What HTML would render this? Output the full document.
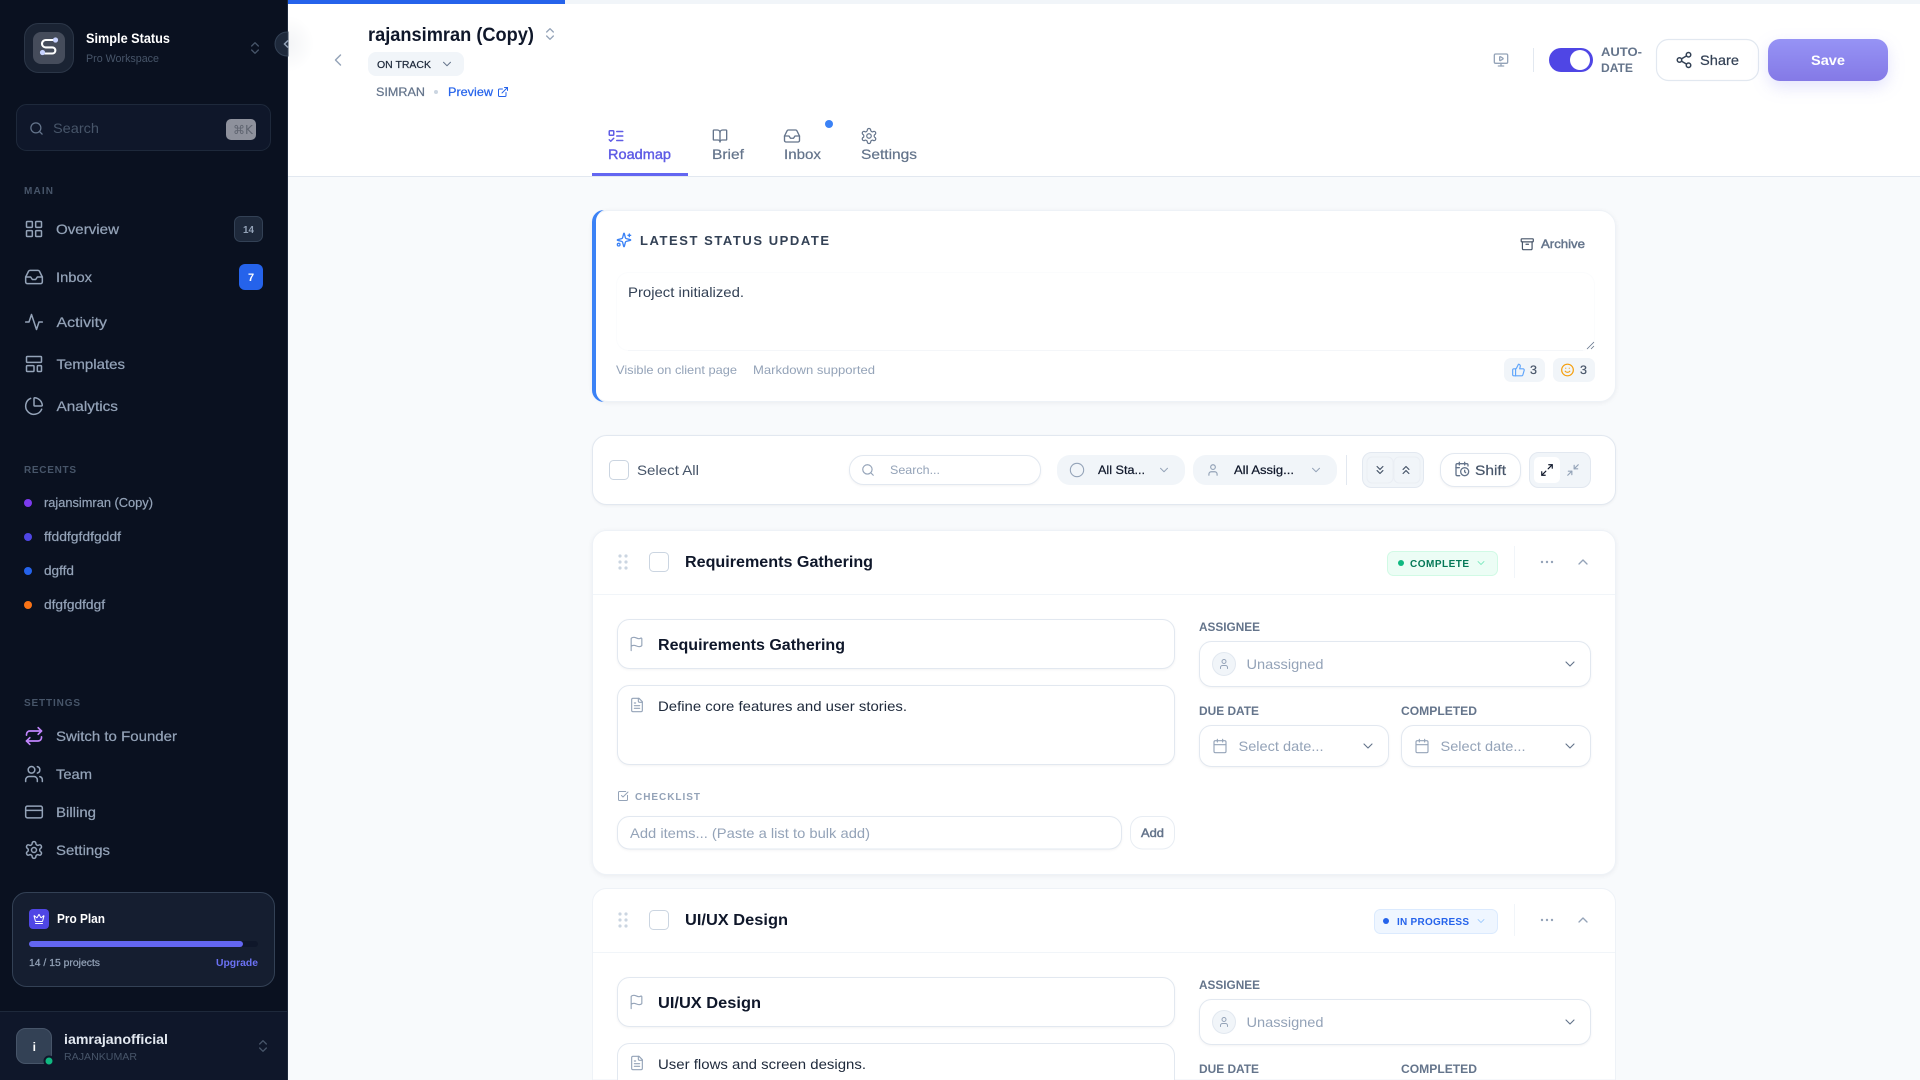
<!DOCTYPE html>
<html lang="en"><head><meta charset="utf-8"><title>Simple Status</title>
<style>
html,body{margin:0;padding:0;width:1920px;height:1080px;overflow:hidden;background:#f8fafc}
svg{display:block}
text{font-family:"Liberation Sans",sans-serif;fill:currentColor;white-space:pre}
.b{font-weight:700}
.m{stroke:currentColor;stroke-width:.22px}
.ic{fill:none;stroke:currentColor;stroke-linecap:round;stroke-linejoin:round;stroke-width:2}
.s1{filter:drop-shadow(0 1px 2px rgba(15,23,42,.06))}
.s2{filter:drop-shadow(0 1px 1px rgba(15,23,42,.05))}
.s3{filter:drop-shadow(0 6px 8px rgba(99,102,241,.18))}
</style></head><body>
<svg width="1920" height="1080" viewBox="0 0 1920 1080" xmlns="http://www.w3.org/2000/svg">
<defs>
<symbol id="grid" viewBox="0 0 24 24"><g class="ic" style="stroke-width:inherit"><rect x="3" y="3" width="7" height="7" rx="1"/><rect x="14" y="3" width="7" height="7" rx="1"/><rect x="14" y="14" width="7" height="7" rx="1"/><rect x="3" y="14" width="7" height="7" rx="1"/></g></symbol>
<symbol id="inbox" viewBox="0 0 24 24"><g class="ic" style="stroke-width:inherit"><polyline points="22 12 16 12 14 15 10 15 8 12 2 12"/><path d="M5.45 5.11 2 12v6a2 2 0 0 0 2 2h16a2 2 0 0 0 2-2v-6l-3.45-6.89A2 2 0 0 0 16.76 4H7.24a2 2 0 0 0-1.79 1.11z"/></g></symbol>
<symbol id="activity" viewBox="0 0 24 24"><g class="ic" style="stroke-width:inherit"><polyline points="22 12 18 12 15 21 9 3 6 12 2 12"/></g></symbol>
<symbol id="tmpl" viewBox="0 0 24 24"><g class="ic" style="stroke-width:inherit"><rect x="3" y="3" width="18" height="7" rx="1"/><rect x="3" y="14" width="9" height="7" rx="1"/><rect x="16" y="14" width="5" height="7" rx="1"/></g></symbol>
<symbol id="pie" viewBox="0 0 24 24"><g class="ic" style="stroke-width:inherit"><path d="M21 12c.552 0 1.005-.449.95-.998a10 10 0 0 0-8.953-8.951c-.55-.055-.998.398-.998.95v8a1 1 0 0 0 1 1z"/><path d="M21.21 15.89A10 10 0 1 1 8 2.83"/></g></symbol>
<symbol id="repeat" viewBox="0 0 24 24"><g class="ic" style="stroke-width:inherit"><path d="m17 2 4 4-4 4"/><path d="M3 11v-1a4 4 0 0 1 4-4h14"/><path d="m7 22-4-4 4-4"/><path d="M21 13v1a4 4 0 0 1-4 4H3"/></g></symbol>
<symbol id="users" viewBox="0 0 24 24"><g class="ic" style="stroke-width:inherit"><path d="M16 21v-2a4 4 0 0 0-4-4H6a4 4 0 0 0-4 4v2"/><circle cx="9" cy="7" r="4"/><path d="M22 21v-2a4 4 0 0 0-3-3.87"/><path d="M16 3.13a4 4 0 0 1 0 7.75"/></g></symbol>
<symbol id="card" viewBox="0 0 24 24"><g class="ic" style="stroke-width:inherit"><rect x="2" y="5" width="20" height="14" rx="2"/><line x1="2" y1="10" x2="22" y2="10"/></g></symbol>
<symbol id="gear" viewBox="0 0 24 24"><g class="ic" style="stroke-width:inherit"><path d="M12.22 2h-.44a2 2 0 0 0-2 2v.18a2 2 0 0 1-1 1.73l-.43.25a2 2 0 0 1-2 0l-.15-.08a2 2 0 0 0-2.73.73l-.22.38a2 2 0 0 0 .73 2.73l.15.1a2 2 0 0 1 1 1.72v.51a2 2 0 0 1-1 1.74l-.15.09a2 2 0 0 0-.73 2.73l.22.38a2 2 0 0 0 2.73.73l.15-.08a2 2 0 0 1 2 0l.43.25a2 2 0 0 1 1 1.73V20a2 2 0 0 0 2 2h.44a2 2 0 0 0 2-2v-.18a2 2 0 0 1 1-1.73l.43-.25a2 2 0 0 1 2 0l.15.08a2 2 0 0 0 2.73-.73l.22-.39a2 2 0 0 0-.73-2.73l-.15-.08a2 2 0 0 1-1-1.74v-.5a2 2 0 0 1 1-1.74l.15-.09a2 2 0 0 0 .73-2.73l-.22-.38a2 2 0 0 0-2.73-.73l-.15.08a2 2 0 0 1-2 0l-.43-.25a2 2 0 0 1-1-1.73V4a2 2 0 0 0-2-2z"/><circle cx="12" cy="12" r="3"/></g></symbol>
<symbol id="search" viewBox="0 0 24 24"><g class="ic"><circle cx="11" cy="11" r="8"/><path d="m21 21-4.3-4.3"/></g></symbol>
<symbol id="updown" viewBox="0 0 24 24"><g class="ic"><path d="m7 15 5 5 5-5"/><path d="m7 9 5-5 5 5"/></g></symbol>
<symbol id="cdown" viewBox="0 0 24 24"><g class="ic" style="stroke-width:1.7"><path d="m6 9 6 6 6-6"/></g></symbol>
<symbol id="cup" viewBox="0 0 24 24"><g class="ic"><path d="m18 15-6-6-6 6"/></g></symbol>
<symbol id="cleft" viewBox="0 0 24 24"><g class="ic" style="stroke-width:1.7"><path d="m15 18-6-6 6-6"/></g></symbol>
<symbol id="ext" viewBox="0 0 24 24"><g class="ic"><path d="M15 3h6v6"/><path d="M10 14 21 3"/><path d="M18 13v6a2 2 0 0 1-2 2H5a2 2 0 0 1-2-2V8a2 2 0 0 1 2-2h6"/></g></symbol>
<symbol id="todo" viewBox="0 0 24 24"><g class="ic"><rect x="3" y="5" width="6" height="6" rx="1"/><path d="m3 17 2 2 4-4"/><path d="M13 6h8"/><path d="M13 12h8"/><path d="M13 18h8"/></g></symbol>
<symbol id="book" viewBox="0 0 24 24"><g class="ic"><path d="M12 7v14"/><path d="M3 18a1 1 0 0 1-1-1V4a1 1 0 0 1 1-1h5a4 4 0 0 1 4 4 4 4 0 0 1 4-4h5a1 1 0 0 1 1 1v13a1 1 0 0 1-1 1h-6a3 3 0 0 0-3 3 3 3 0 0 0-3-3z"/></g></symbol>
<symbol id="mon" viewBox="0 0 24 24"><g class="ic"><path d="M10 7.75a.75.75 0 0 1 1.142-.638l3.664 2.249a.75.75 0 0 1 0 1.278l-3.664 2.25a.75.75 0 0 1-1.142-.64z"/><path d="M12 17v4"/><path d="M8 21h8"/><rect x="2" y="3" width="20" height="14" rx="2"/></g></symbol>
<symbol id="share" viewBox="0 0 24 24"><g class="ic"><circle cx="18" cy="5" r="3"/><circle cx="6" cy="12" r="3"/><circle cx="18" cy="19" r="3"/><line x1="8.59" y1="13.51" x2="15.42" y2="17.49"/><line x1="15.41" y1="6.51" x2="8.59" y2="10.49"/></g></symbol>
<symbol id="spark" viewBox="0 0 24 24"><g class="ic"><path d="M9.937 15.5A2 2 0 0 0 8.5 14.063l-6.135-1.582a.5.5 0 0 1 0-.962L8.5 9.936A2 2 0 0 0 9.937 8.5l1.582-6.135a.5.5 0 0 1 .963 0L14.063 8.5A2 2 0 0 0 15.5 9.937l6.135 1.581a.5.5 0 0 1 0 .964L15.5 14.063a2 2 0 0 0-1.437 1.437l-1.582 6.135a.5.5 0 0 1-.963 0z"/><path d="M20 3v4"/><path d="M22 5h-4"/><circle cx="4" cy="19" r="2"/></g></symbol>
<symbol id="arch" viewBox="0 0 24 24"><g class="ic"><rect x="2" y="3" width="20" height="5" rx="1"/><path d="M4 8v11a2 2 0 0 0 2 2h12a2 2 0 0 0 2-2V8"/><path d="M10 12h4"/></g></symbol>
<symbol id="thumb" viewBox="0 0 24 24"><g class="ic"><path d="M7 10v12"/><path d="M15 5.88 14 10h5.83a2 2 0 0 1 1.92 2.56l-2.33 8A2 2 0 0 1 17.5 22H4a2 2 0 0 1-2-2v-8a2 2 0 0 1 2-2h2.76a2 2 0 0 0 1.79-1.11L12 2a3.13 3.13 0 0 1 3 3.88Z"/></g></symbol>
<symbol id="smile" viewBox="0 0 24 24"><g class="ic"><circle cx="12" cy="12" r="10"/><path d="M8 14s1.5 2 4 2 4-2 4-2"/><line x1="9" y1="9" x2="9.01" y2="9"/><line x1="15" y1="9" x2="15.01" y2="9"/></g></symbol>
<symbol id="circ" viewBox="0 0 24 24"><g class="ic" style="stroke-width:1.6"><circle cx="12" cy="12" r="10"/></g></symbol>
<symbol id="user" viewBox="0 0 24 24"><g class="ic"><path d="M19 21v-2a4 4 0 0 0-4-4H9a4 4 0 0 0-4 4v2"/><circle cx="12" cy="7" r="4"/></g></symbol>
<symbol id="dd" viewBox="0 0 24 24"><g class="ic"><path d="m7 6 5 5 5-5"/><path d="m7 13 5 5 5-5"/></g></symbol>
<symbol id="du" viewBox="0 0 24 24"><g class="ic"><path d="m17 11-5-5-5 5"/><path d="m17 18-5-5-5 5"/></g></symbol>
<symbol id="calc" viewBox="0 0 24 24"><g class="ic"><path d="M21 7.5V6a2 2 0 0 0-2-2H5a2 2 0 0 0-2 2v14a2 2 0 0 0 2 2h3.5"/><path d="M16 2v4"/><path d="M8 2v4"/><path d="M3 10h5"/><path d="M17.5 17.5 16 16.3V14"/><circle cx="16" cy="16" r="6"/></g></symbol>
<symbol id="max" viewBox="0 0 24 24"><g class="ic"><path d="M15 3h6v6"/><path d="m21 3-7 7"/><path d="m3 21 7-7"/><path d="M9 21H3v-6"/></g></symbol>
<symbol id="min" viewBox="0 0 24 24"><g class="ic"><path d="m14 10 7-7"/><path d="M20 10h-6V4"/><path d="m3 21 7-7"/><path d="M4 14h6v6"/></g></symbol>
<symbol id="flag" viewBox="0 0 24 24"><g class="ic" style="stroke-width:1.7"><path d="M4 22V4a1 1 0 0 1 .4-.8A6 6 0 0 1 8 2c3 0 5 2 7.333 2q2 0 3.067-.8A1 1 0 0 1 20 4v10a1 1 0 0 1-.4.8A6 6 0 0 1 16 16c-3 0-5-2-8-2a6 6 0 0 0-4 1.528"/></g></symbol>
<symbol id="file" viewBox="0 0 24 24"><g class="ic" style="stroke-width:1.7"><path d="M15 2H6a2 2 0 0 0-2 2v16a2 2 0 0 0 2 2h12a2 2 0 0 0 2-2V7Z"/><path d="M14 2v4a2 2 0 0 0 2 2h4"/><path d="M10 9H8"/><path d="M16 13H8"/><path d="M16 17H8"/></g></symbol>
<symbol id="check" viewBox="0 0 24 24"><g class="ic"><path d="M21 10.656V19a2 2 0 0 1-2 2H5a2 2 0 0 1-2-2V5a2 2 0 0 1 2-2h12.344"/><path d="m9 11 3 3L22 4"/></g></symbol>
<symbol id="cal" viewBox="0 0 24 24"><g class="ic" style="stroke-width:1.7"><path d="M8 2v4"/><path d="M16 2v4"/><rect x="3" y="4" width="18" height="18" rx="2"/><path d="M3 10h18"/></g></symbol>
<symbol id="crown" viewBox="0 0 24 24"><g class="ic"><path d="M11.562 3.266a.5.5 0 0 1 .876 0L15.39 8.87a1 1 0 0 0 1.516.294L21.183 5.5a.5.5 0 0 1 .798.519l-2.834 10.246a1 1 0 0 1-.956.734H5.81a1 1 0 0 1-.957-.734L2.02 6.02a.5.5 0 0 1 .798-.519l4.276 3.664a1 1 0 0 0 1.516-.294z"/><path d="M5 21h14"/></g></symbol>
<linearGradient id="save" x1="0" y1="0" x2="0" y2="1"><stop offset="0" stop-color="#9693f5"/><stop offset="1" stop-color="#8479e6"/></linearGradient>
<radialGradient id="hg" cx=".5" cy=".5" r=".5"><stop offset="0" stop-color="#f3f4f6"/><stop offset="1" stop-color="#fff"/></radialGradient>
</defs>

<!-- Main background -->
<rect x="288" y="0" width="1632" height="1080" fill="#f8fafc"/>
<rect x="288" y="0" width="1632" height="176" fill="#fff"/>
<ellipse cx="288" cy="44" rx="26" ry="28" fill="url(#hg)"/>
<rect x="288" y="176" width="1632" height="1" fill="#e2e8f0"/>
<rect x="288" y="0" width="1632" height="4" fill="#f1f5f9"/>
<rect x="288" y="0" width="277" height="4" fill="#2563eb"/>

<!-- Header -->
<use href="#cleft" x="328" y="50" width="20" height="20" color="#94a3b8"/>
<text x="368" y="41" textLength="166" lengthAdjust="spacingAndGlyphs" font-size="19" class="b" color="#0f172a">rajansimran (Copy)</text>
<use href="#updown" x="542" y="26" width="16" height="16" color="#94a3b8"/>
<rect x="368" y="52" width="96" height="24" rx="8" fill="#f1f5f9"/>
<text x="377" y="68" textLength="54" lengthAdjust="spacingAndGlyphs" font-size="10.5" class="m" color="#1e293b">ON TRACK</text>
<use href="#cdown" x="440" y="57" width="14" height="14" color="#64748b"/>
<text x="376" y="96" textLength="49" lengthAdjust="spacingAndGlyphs" font-size="12" class="m" color="#64748b">SIMRAN</text>
<circle cx="436" cy="92" r="2" fill="#cbd5e1"/>
<text x="448" y="96" textLength="45" lengthAdjust="spacingAndGlyphs" font-size="12" class="m" color="#2563eb">Preview</text>
<use href="#ext" x="497" y="86" width="12" height="12" color="#2563eb"/>

<use href="#todo" x="607" y="127" width="18" height="18" color="#5f5ce5"/>
<text x="608" y="159" textLength="63" lengthAdjust="spacingAndGlyphs" font-size="14" class="m" color="#5f5ce5" style="stroke-width:.4px">Roadmap</text>
<rect x="592" y="173" width="96" height="3" fill="#6366f1"/>
<use href="#book" x="712" y="128" width="16" height="16" color="#64748b"/>
<text x="712" y="159" textLength="32" lengthAdjust="spacingAndGlyphs" font-size="14" class="m" color="#64748b">Brief</text>
<use href="#inbox" x="783" y="127" width="18" height="18" color="#64748b" stroke-width="1.8"/>
<text x="784" y="159" textLength="37" lengthAdjust="spacingAndGlyphs" font-size="14" class="m" color="#64748b">Inbox</text>
<circle cx="829" cy="124" r="4" fill="#3b82f6"/>
<use href="#gear" x="860" y="127" width="18" height="18" color="#64748b" stroke-width="1.6"/>
<text x="861" y="159" textLength="56" lengthAdjust="spacingAndGlyphs" font-size="14" class="m" color="#64748b">Settings</text>

<use href="#mon" x="1493" y="52" width="16" height="16" color="#94a3b8"/>
<rect x="1533" y="48" width="1" height="24" fill="#e2e8f0"/>
<rect x="1549" y="48" width="44" height="24" rx="12" fill="#4f46e5"/>
<circle cx="1580" cy="60" r="10" fill="#fff"/>
<text x="1601" y="56" textLength="41" lengthAdjust="spacingAndGlyphs" font-size="12" class="b" color="#64748b">AUTO-</text>
<text x="1601" y="72" textLength="32" lengthAdjust="spacingAndGlyphs" font-size="12" class="b" color="#64748b">DATE</text>
<rect x="1656.5" y="39.5" width="102" height="41" rx="12" fill="#fff" stroke="#e2e8f0" stroke-width="1.2"/>
<use href="#share" x="1675" y="51" width="18" height="18" color="#334155"/>
<text x="1700" y="65" textLength="39" lengthAdjust="spacingAndGlyphs" font-size="14" class="m" color="#334155">Share</text>
<rect x="1768" y="39" width="120" height="42" rx="12" fill="url(#save)" class="s3"/>
<text x="1811" y="65" textLength="34" lengthAdjust="spacingAndGlyphs" font-size="14" class="b" color="#fff">Save</text>

<!-- Status card -->
<rect x="592.5" y="210.5" width="1023" height="191" rx="16" fill="#fff" stroke="#eef2f7" class="s1"/>
<path d="M604 210a12 12 0 0 0-12 12v168a12 12 0 0 0 12 12 12 12 0 0 1-8-12V222a12 12 0 0 1 8-12z" fill="#3b82f6"/>
<use href="#spark" x="616" y="232" width="16" height="16" color="#3b82f6"/>
<text x="640" y="245" textLength="189" lengthAdjust="spacing" font-size="13" class="b" color="#334155">LATEST STATUS UPDATE</text>
<use href="#arch" x="1520" y="237" width="14.5" height="14.5" color="#475569"/>
<text x="1541" y="248" textLength="44" lengthAdjust="spacingAndGlyphs" font-size="12" class="m" color="#64748b" style="stroke-width:.45px">Archive</text>
<rect x="616.5" y="272.5" width="978" height="78" rx="12" fill="#fff" stroke="#fbfcfd"/>
<path d="M628 350.500H1583" stroke="#f4f6f9" fill="none"/>
<text x="628" y="297" textLength="116" lengthAdjust="spacingAndGlyphs" font-size="14" color="#334155">Project initialized.</text>
<path d="M1587 349l7-7M1591 349l3-3" stroke="#64748b" stroke-width=".8" fill="none"/>
<text x="616" y="374" textLength="121" lengthAdjust="spacingAndGlyphs" font-size="12" color="#94a3b8">Visible on client page</text>
<text x="753" y="374" textLength="122" lengthAdjust="spacingAndGlyphs" font-size="12" color="#94a3b8">Markdown supported</text>
<rect x="1504" y="358" width="41" height="24" rx="7" fill="#f1f5f9"/>
<use href="#thumb" x="1511.5" y="363" width="14" height="14" color="#60a5fa"/>
<text x="1530" y="374" font-size="12" textLength="7" lengthAdjust="spacingAndGlyphs" class="m" color="#475569">3</text>
<rect x="1553" y="358" width="42" height="24" rx="7" fill="#f1f5f9"/>
<use href="#smile" x="1560.5" y="363" width="14" height="14" color="#f59e0b"/>
<text x="1580" y="374" font-size="12" textLength="7" lengthAdjust="spacingAndGlyphs" class="m" color="#475569">3</text>

<!-- Toolbar -->
<rect x="592.5" y="435.5" width="1023" height="69" rx="14" fill="#fff" stroke="#e2e8f0" class="s2"/>
<rect x="609.5" y="460.5" width="19" height="19" rx="4" fill="#fff" stroke="#cbd5e1"/>
<text x="637" y="475" textLength="62" lengthAdjust="spacingAndGlyphs" font-size="14" color="#475569">Select All</text>
<rect x="849.5" y="455.5" width="191" height="29" rx="14" fill="#fff" stroke="#e2e8f0" class="s2"/>
<use href="#search" x="861" y="463" width="14" height="14" color="#94a3b8"/>
<text x="890" y="474" textLength="50" lengthAdjust="spacingAndGlyphs" font-size="12" color="#94a3b8">Search...</text>
<rect x="1057" y="455" width="128" height="30" rx="13" fill="#f1f5f9"/>
<use href="#circ" x="1069" y="462" width="16" height="16" color="#94a3b8"/>
<text x="1098" y="474" textLength="47" lengthAdjust="spacingAndGlyphs" font-size="12" class="m" color="#0f172a">All Sta...</text>
<use href="#cdown" x="1157" y="463" width="14" height="14" color="#94a3b8"/>
<rect x="1193" y="455" width="144" height="30" rx="13" fill="#f1f5f9"/>
<use href="#user" x="1206" y="463" width="14" height="14" color="#94a3b8"/>
<text x="1234" y="474" textLength="60" lengthAdjust="spacingAndGlyphs" font-size="12" class="m" color="#0f172a">All Assig...</text>
<use href="#cdown" x="1309" y="463" width="14" height="14" color="#94a3b8"/>
<rect x="1346" y="455" width="1" height="30" fill="#e2e8f0"/>
<rect x="1362.5" y="452.5" width="61" height="35" rx="9" fill="#f1f5f9" stroke="#e2e8f0"/>
<rect x="1367" y="457" width="26" height="26" rx="5" fill="#f1f5f9" stroke="#eaeef4"/>
<rect x="1394" y="457" width="26" height="26" rx="5" fill="#f1f5f9" stroke="#eaeef4"/>
<use href="#dd" x="1373" y="463" width="14" height="14" color="#475569"/>
<use href="#du" x="1399" y="463" width="14" height="14" color="#475569"/>
<rect x="1440.5" y="453.5" width="80" height="33" rx="14" fill="#fff" stroke="#e2e8f0" class="s2"/>
<use href="#calc" x="1454" y="461" width="16" height="16" color="#64748b"/>
<text x="1475" y="475" textLength="31" lengthAdjust="spacingAndGlyphs" font-size="14" class="m" color="#475569">Shift</text>
<rect x="1529.5" y="452.5" width="61" height="35" rx="9" fill="#f1f5f9" stroke="#e2e8f0"/>
<rect x="1534" y="457" width="26" height="26" rx="5" fill="#fff"/>
<use href="#max" x="1540" y="463" width="14" height="14" color="#0f172a"/>
<use href="#min" x="1566" y="463" width="14" height="14" color="#94a3b8"/>

<!-- Task card 1 -->
<g>
<rect x="592.5" y="530.5" width="1023" height="344" rx="14" fill="#fff" stroke="#eef2f7" class="s1"/>
<rect x="593" y="594" width="1022" height="1" fill="#f1f5f9"/>
<g fill="#cbd5e1"><circle cx="620" cy="556" r="1.6"/><circle cx="626" cy="556" r="1.6"/><circle cx="620" cy="562" r="1.6"/><circle cx="626" cy="562" r="1.6"/><circle cx="620" cy="568" r="1.6"/><circle cx="626" cy="568" r="1.6"/></g>
<rect x="649.5" y="552.5" width="19" height="19" rx="4" fill="#fff" stroke="#cbd5e1"/>
<text x="685" y="567" textLength="188" lengthAdjust="spacingAndGlyphs" font-size="16" class="b" color="#0f172a">Requirements Gathering</text>
<rect x="1387.5" y="551.5" width="110" height="24" rx="6" fill="#ecfdf5" stroke="#d1fae5"/>
<circle cx="1401" cy="563" r="3" fill="#10b981"/>
<text x="1410" y="567" textLength="59" lengthAdjust="spacing" font-size="10" class="b" color="#047857">COMPLETE</text>
<use href="#cdown" x="1475" y="557" width="12" height="12" color="#6ee7b7"/>
<rect x="1514" y="546" width="1" height="32" fill="#f1f5f9"/>
<g fill="#94a3b8"><circle cx="1542" cy="562" r="1.2"/><circle cx="1547" cy="562" r="1.2"/><circle cx="1552" cy="562" r="1.2"/></g>
<use href="#cup" x="1575" y="554" width="16" height="16" color="#94a3b8"/>

<rect x="617.5" y="619.5" width="557" height="49" rx="12" fill="#fff" stroke="#e2e8f0" class="s2"/>
<use href="#flag" x="628.5" y="636" width="16" height="16" color="#94a3b8"/>
<text x="658" y="650" textLength="187" lengthAdjust="spacingAndGlyphs" font-size="16" class="b" color="#0f172a">Requirements Gathering</text>
<rect x="617.5" y="685.5" width="557" height="79" rx="12" fill="#fff" stroke="#e2e8f0" class="s2"/>
<use href="#file" x="629" y="697" width="16" height="16" color="#94a3b8"/>
<text x="658" y="711" textLength="249" lengthAdjust="spacingAndGlyphs" font-size="14" color="#1e293b">Define core features and user stories.</text>
<use href="#check" x="617" y="790" width="12" height="12" color="#94a3b8"/>
<text x="635" y="800" textLength="65" lengthAdjust="spacing" font-size="10" class="b" color="#94a3b8">CHECKLIST</text>
<rect x="617.5" y="816.5" width="504" height="32.5" rx="12" fill="#fff" stroke="#e2e8f0" class="s2"/>
<text x="630" y="838" textLength="240" lengthAdjust="spacingAndGlyphs" font-size="14" color="#94a3b8">Add items... (Paste a list to bulk add)</text>
<rect x="1130.5" y="816.5" width="44" height="32.5" rx="12" fill="#fff" stroke="#e8edf3"/>
<text x="1141" y="837" textLength="23" lengthAdjust="spacingAndGlyphs" font-size="12" class="m" color="#64748b" style="stroke-width:.45px">Add</text>

<text x="1199" y="631" textLength="61" lengthAdjust="spacingAndGlyphs" font-size="12" class="b" color="#64748b">ASSIGNEE</text>
<rect x="1199.5" y="641.5" width="391" height="45" rx="12" fill="#fff" stroke="#e2e8f0" class="s2"/>
<circle cx="1224" cy="664" r="11.5" fill="#f1f5f9" stroke="#e2e8f0"/>
<use href="#user" x="1218" y="658" width="12" height="12" color="#94a3b8"/>
<text x="1246.5" y="669" textLength="77" lengthAdjust="spacingAndGlyphs" font-size="14" color="#94a3b8">Unassigned</text>
<use href="#cdown" x="1562" y="656" width="16" height="16" color="#64748b"/>
<text x="1199" y="715" textLength="60" lengthAdjust="spacingAndGlyphs" font-size="12" class="b" color="#64748b">DUE DATE</text>
<text x="1401" y="715" textLength="76" lengthAdjust="spacingAndGlyphs" font-size="12" class="b" color="#64748b">COMPLETED</text>
<rect x="1199.5" y="725.5" width="189" height="41" rx="12" fill="#fff" stroke="#e2e8f0" class="s2"/>
<use href="#cal" x="1212" y="738" width="16" height="16" color="#94a3b8"/>
<text x="1238.5" y="751" textLength="85" lengthAdjust="spacingAndGlyphs" font-size="14" color="#94a3b8">Select date...</text>
<use href="#cdown" x="1360" y="738" width="16" height="16" color="#64748b"/>
<rect x="1401.5" y="725.5" width="189" height="41" rx="12" fill="#fff" stroke="#e2e8f0" class="s2"/>
<use href="#cal" x="1414" y="738" width="16" height="16" color="#94a3b8"/>
<text x="1440.5" y="751" textLength="85" lengthAdjust="spacingAndGlyphs" font-size="14" color="#94a3b8">Select date...</text>
<use href="#cdown" x="1562" y="738" width="16" height="16" color="#64748b"/>
</g>

<!-- Task card 2 -->
<g>
<path d="M592.5 1080V902.5a14 14 0 0 1 14-14H1601.5a14 14 0 0 1 14 14V1080z" fill="#fff" stroke="#eef2f7"/>
<rect x="593" y="952" width="1022" height="1" fill="#f1f5f9"/>
<g fill="#cbd5e1"><circle cx="620" cy="914" r="1.6"/><circle cx="626" cy="914" r="1.6"/><circle cx="620" cy="920" r="1.6"/><circle cx="626" cy="920" r="1.6"/><circle cx="620" cy="926" r="1.6"/><circle cx="626" cy="926" r="1.6"/></g>
<rect x="649.5" y="910.5" width="19" height="19" rx="4" fill="#fff" stroke="#cbd5e1"/>
<text x="685" y="925" textLength="103" lengthAdjust="spacingAndGlyphs" font-size="16" class="b" color="#0f172a">UI/UX Design</text>
<rect x="1374.5" y="909.5" width="123" height="24" rx="6" fill="#eff6ff" stroke="#dbeafe"/>
<circle cx="1386" cy="921" r="3" fill="#2563eb"/>
<text x="1397" y="925" textLength="72" lengthAdjust="spacing" font-size="10" class="b" color="#2563eb">IN PROGRESS</text>
<use href="#cdown" x="1475" y="915" width="12" height="12" color="#93c5fd"/>
<rect x="1514" y="904" width="1" height="32" fill="#f1f5f9"/>
<g fill="#94a3b8"><circle cx="1542" cy="920" r="1.2"/><circle cx="1547" cy="920" r="1.2"/><circle cx="1552" cy="920" r="1.2"/></g>
<use href="#cup" x="1575" y="912" width="16" height="16" color="#94a3b8"/>
<rect x="617.5" y="977.5" width="557" height="49" rx="12" fill="#fff" stroke="#e2e8f0" class="s2"/>
<use href="#flag" x="628.5" y="994" width="16" height="16" color="#94a3b8"/>
<text x="658" y="1008" textLength="103" lengthAdjust="spacingAndGlyphs" font-size="16" class="b" color="#0f172a">UI/UX Design</text>
<path d="M617.5 1080V1055.5a12 12 0 0 1 12-12H1162.5a12 12 0 0 1 12 12V1080" fill="#fff" stroke="#e2e8f0"/>
<use href="#file" x="629" y="1055" width="16" height="16" color="#94a3b8"/>
<text x="658" y="1069" textLength="208" lengthAdjust="spacingAndGlyphs" font-size="14" color="#1e293b">User flows and screen designs.</text>
<text x="1199" y="989" textLength="61" lengthAdjust="spacingAndGlyphs" font-size="12" class="b" color="#64748b">ASSIGNEE</text>
<rect x="1199.5" y="999.5" width="391" height="45" rx="12" fill="#fff" stroke="#e2e8f0" class="s2"/>
<circle cx="1224" cy="1022" r="11.5" fill="#f1f5f9" stroke="#e2e8f0"/>
<use href="#user" x="1218" y="1016" width="12" height="12" color="#94a3b8"/>
<text x="1246.5" y="1027" textLength="77" lengthAdjust="spacingAndGlyphs" font-size="14" color="#94a3b8">Unassigned</text>
<use href="#cdown" x="1562" y="1014" width="16" height="16" color="#64748b"/>
<text x="1199" y="1073" textLength="60" lengthAdjust="spacingAndGlyphs" font-size="12" class="b" color="#64748b">DUE DATE</text>
<text x="1401" y="1073" textLength="76" lengthAdjust="spacingAndGlyphs" font-size="12" class="b" color="#64748b">COMPLETED</text>
</g>

<!-- Sidebar -->
<rect x="0" y="0" width="288" height="1080" fill="#0a1120"/>
<rect x="287" y="0" width="1" height="1080" fill="#1e293b"/>
<path d="M288 32h-1a12 12 0 0 0 0 24h1z" fill="#1e293b" stroke="#334155"/>
<path d="M288 40.5l-3.5 3.5 3.5 3.5" fill="none" stroke="#94a3b8" stroke-width="1.5"/>
<rect x="24.5" y="23.5" width="49" height="49" rx="14" fill="#1a2333" stroke="#2b3647"/>
<rect x="33" y="32" width="32" height="32" rx="8" fill="#454c5b"/>
<path d="M56 40H45.7a3.7 3.7 0 0 0 0 7.4h6.6a3.05 3.05 0 0 1 0 6.1H42" fill="none" stroke="#fff" stroke-width="2.1" stroke-linecap="round"/>
<circle cx="55.5" cy="40" r="2.6" fill="#c7d2fe"/>
<circle cx="42.5" cy="52.5" r="2.6" fill="#c7d2fe"/>
<text x="86" y="43" textLength="84" lengthAdjust="spacingAndGlyphs" font-size="14" class="b" color="#fff">Simple Status</text>
<text x="86" y="62" textLength="73" lengthAdjust="spacingAndGlyphs" font-size="11" color="#475569">Pro Workspace</text>
<use href="#updown" x="247" y="40" width="16" height="16" color="#475569"/>

<rect x="16.5" y="104.5" width="254" height="46" rx="10" fill="#0f172a" stroke="#1e293b"/>
<use href="#search" x="29" y="121" width="15" height="15" color="#64748b"/>
<text x="53" y="133" textLength="46" lengthAdjust="spacingAndGlyphs" font-size="14" color="#475569">Search</text>
<rect x="226" y="119" width="30" height="21" rx="5" fill="#8e919c"/>
<text x="233" y="134" font-size="12" style="font-family:'DejaVu Sans',sans-serif" color="#5f6470">⌘K</text>

<text x="24" y="194" textLength="29" lengthAdjust="spacing" font-size="10" class="b" color="#475569">MAIN</text>
<use href="#grid" x="24" y="219" width="20" height="20" color="#94a3b8" stroke-width="1.8"/>
<text x="56" y="234" textLength="63" lengthAdjust="spacingAndGlyphs" font-size="14" class="m" color="#94a3b8">Overview</text>
<rect x="234.5" y="216.5" width="28" height="25" rx="6" fill="#1e293b" stroke="#334155"/>
<text x="243" y="233" textLength="11" lengthAdjust="spacingAndGlyphs" font-size="10.5" class="b" color="#94a3b8">14</text>
<use href="#inbox" x="24" y="267" width="20" height="20" color="#94a3b8" stroke-width="1.8"/>
<text x="56" y="282" textLength="36" lengthAdjust="spacingAndGlyphs" font-size="14" class="m" color="#94a3b8">Inbox</text>
<rect x="239" y="264" width="24" height="26" rx="6" fill="#2563eb"/>
<text x="248" y="281" font-size="11" class="b" color="#fff">7</text>
<use href="#activity" x="24" y="312" width="20" height="20" color="#94a3b8" stroke-width="1.8"/>
<text x="56.5" y="327" textLength="50.5" lengthAdjust="spacingAndGlyphs" font-size="14" class="m" color="#94a3b8">Activity</text>
<use href="#tmpl" x="24" y="354" width="20" height="20" color="#94a3b8" stroke-width="1.8"/>
<text x="56.5" y="369" textLength="68.5" lengthAdjust="spacingAndGlyphs" font-size="14" class="m" color="#94a3b8">Templates</text>
<use href="#pie" x="24" y="396" width="20" height="20" color="#94a3b8" stroke-width="1.8"/>
<text x="56.5" y="411" textLength="61.5" lengthAdjust="spacingAndGlyphs" font-size="14" class="m" color="#94a3b8">Analytics</text>

<text x="24" y="473" textLength="52" lengthAdjust="spacing" font-size="10" class="b" color="#475569">RECENTS</text>
<circle cx="28" cy="503" r="4" fill="#7c3aed"/>
<text x="44" y="507" textLength="109" lengthAdjust="spacingAndGlyphs" font-size="13" class="m" color="#94a3b8">rajansimran (Copy)</text>
<circle cx="28" cy="537" r="4" fill="#4f46e5"/>
<text x="44" y="541" textLength="77" lengthAdjust="spacingAndGlyphs" font-size="13" class="m" color="#94a3b8">ffddfgfdfgddf</text>
<circle cx="28" cy="571" r="4" fill="#2563eb"/>
<text x="44" y="575" textLength="30" lengthAdjust="spacingAndGlyphs" font-size="13" class="m" color="#94a3b8">dgffd</text>
<circle cx="28" cy="605" r="4" fill="#f97316"/>
<text x="44" y="609" textLength="61" lengthAdjust="spacingAndGlyphs" font-size="13" class="m" color="#94a3b8">dfgfgdfdgf</text>

<text x="24" y="706" textLength="56" lengthAdjust="spacing" font-size="10" class="b" color="#475569">SETTINGS</text>
<use href="#repeat" x="24" y="726" width="20" height="20" color="#c084fc" stroke-width="2"/>
<text x="56" y="741" textLength="121" lengthAdjust="spacingAndGlyphs" font-size="14" class="m" color="#94a3b8">Switch to Founder</text>
<use href="#users" x="24" y="764" width="20" height="20" color="#94a3b8" stroke-width="1.8"/>
<text x="56" y="779" textLength="36" lengthAdjust="spacingAndGlyphs" font-size="14" class="m" color="#94a3b8">Team</text>
<use href="#card" x="24" y="802" width="20" height="20" color="#94a3b8" stroke-width="1.8"/>
<text x="56" y="817" textLength="40" lengthAdjust="spacingAndGlyphs" font-size="14" class="m" color="#94a3b8">Billing</text>
<use href="#gear" x="24" y="840" width="20" height="20" color="#94a3b8" stroke-width="1.8"/>
<text x="56" y="855" textLength="54" lengthAdjust="spacingAndGlyphs" font-size="14" class="m" color="#94a3b8">Settings</text>

<rect x="12.5" y="892.5" width="262" height="94" rx="14" fill="#151e30" stroke="#334155"/>
<rect x="29" y="909" width="20" height="20" rx="4" fill="#4f46e5"/>
<use href="#crown" x="33" y="913" width="12" height="12" color="#fff"/>
<text x="57" y="923" textLength="48" lengthAdjust="spacingAndGlyphs" font-size="13" class="b" color="#fff">Pro Plan</text>
<rect x="29" y="941" width="229" height="6" rx="3" fill="#0f172a"/>
<rect x="29" y="941" width="214" height="6" rx="3" fill="#6366f1"/>
<text x="29" y="966" textLength="71" lengthAdjust="spacingAndGlyphs" font-size="10.5" class="m" color="#94a3b8">14 / 15 projects</text>
<text x="216" y="966" textLength="42" lengthAdjust="spacingAndGlyphs" font-size="10.5" class="b" color="#6c72f5">Upgrade</text>

<rect x="0" y="1011" width="287" height="69" fill="#0f172a"/>
<rect x="0" y="1011" width="287" height="1" fill="#1e293b"/>
<rect x="16.5" y="1028.5" width="35" height="35" rx="9" fill="#334155" stroke="#475569"/>
<text x="32.6" y="1051" font-size="12" class="b" color="#fff">i</text>
<circle cx="49" cy="1061" r="4.5" fill="#10b981" stroke="#0f172a" stroke-width="2"/>
<text x="64" y="1044" textLength="104" lengthAdjust="spacingAndGlyphs" font-size="14" class="b" color="#e2e8f0">iamrajanofficial</text>
<text x="64" y="1060" textLength="73" lengthAdjust="spacingAndGlyphs" font-size="10.5" color="#475569">RAJANKUMAR</text>
<use href="#updown" x="255" y="1038" width="16" height="16" color="#475569"/>
</svg>
</body></html>
